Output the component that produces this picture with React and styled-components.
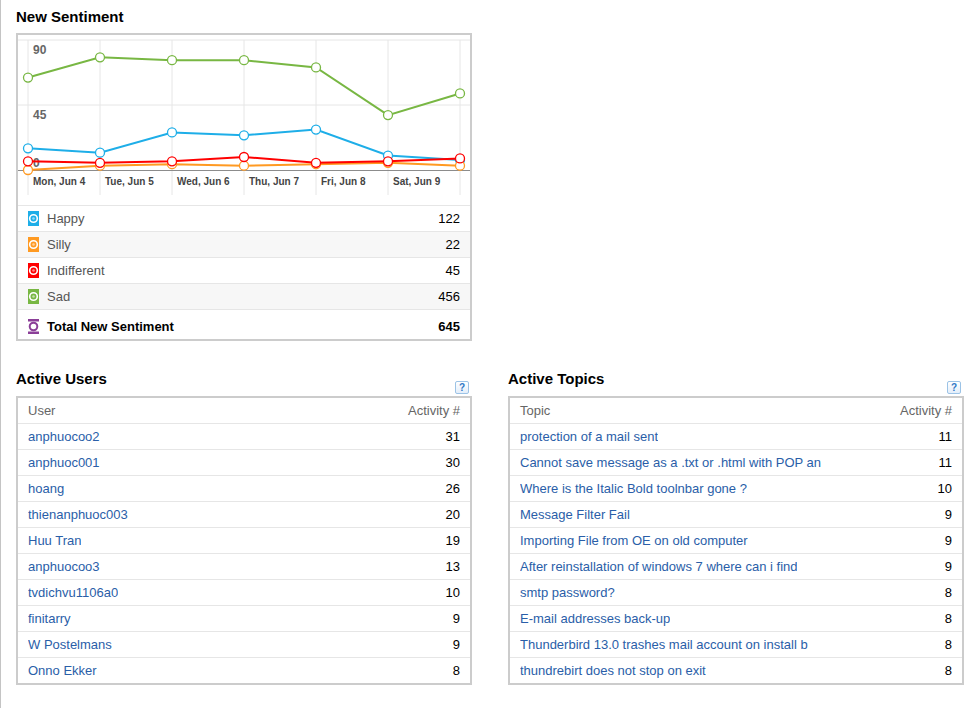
import React from 'react';
import styled, { createGlobalStyle } from 'styled-components';

const GlobalStyle = createGlobalStyle`
    body{
        margin:0;
        background:#fff;
        font-family:"Liberation Sans", Arial, sans-serif;
        font-size:13px;
        color:#000;
    }
`;

const Page = styled.div`
    box-sizing:border-box;
    min-height:100vh;
    border-left:1px solid #c4c4c4;
    padding:8px 3px 20px 15px;
`;

const Title = styled.h2`
    margin:0;
    font-size:15px;
    line-height:18px;
    font-weight:bold;
    color:#000;
`;

const TopSection = styled.section`
    width:456px;
    ${Title}{
        margin-bottom:7px;
    }
`;

const Panel = styled.div`
    border:2px solid #ccc;
    background:#fff;
`;

const Chart = styled.svg`
    display:block;
    width:452px;
    height:170px;
    font-family:"Liberation Sans", Arial, sans-serif;
`;

// rows are 26px with their top rule, the first one 25px, the total row 30px
const Row = styled.div`
    display:flex;
    align-items:center;
    justify-content:space-between;
    box-sizing:border-box;
    height:${p => p.$first ? '25px' : p.$tall ? '30px' : '26px'};
    padding:${p => p.$tall ? '4px 10px 0' : '0 10px'};
    border-top:${p => p.$first ? 'none' : '1px solid #e6e6e6'};
    background:${p => p.$striped ? '#f7f7f7' : '#fff'};
    font-weight:${p => p.$bold ? 'bold' : 'normal'};
    color:${p => p.$muted ? '#666' : '#000'};
    white-space:nowrap;
`;

const LegendLabel = styled.span`
    display:flex;
    align-items:center;
    gap:8px;
    color:${p => p.$strong ? '#000' : '#555'};
`;

const RowLink = styled.a`
    color:#2a5ea8;
    text-decoration:none;
    overflow:hidden;
`;

const Columns = styled.div`
    display:grid;
    grid-template-columns:456px 456px;
    column-gap:36px;
    margin-top:29px;
`;

const ColumnHead = styled.div`
    display:flex;
    justify-content:space-between;
    align-items:flex-start;
    height:26px;
`;

const HelpIcon = styled.span`
    align-self:flex-end;
    margin:0 3px 2px 0;
    width:12px;
    height:11px;
    border:1px solid #9cc3e6;
    border-radius:2px;
    background:linear-gradient(#ffffff, #e3eefa);
    color:#2f78c6;
    font-size:10px;
    font-weight:bold;
    line-height:11px;
    text-align:center;
`;

const days = ['Mon, Jun 4', 'Tue, Jun 5', 'Wed, Jun 6', 'Thu, Jun 7', 'Fri, Jun 8', 'Sat, Jun 9'];
const xs = [10, 82, 154, 226, 298, 370, 442];
const yOf = v => 135 - v * 130 / 90;

const series = [
    { name: 'Sad', color: '#78b743', data: [64, 78, 76, 76, 71, 38, 53] },
    { name: 'Happy', color: '#1eaee8', data: [15, 12, 26, 24, 28, 10, 7] },
    { name: 'Silly', color: '#ff9a22', data: [0, 3, 4, 3, 4, 5, 3] },
    { name: 'Indifferent', color: '#ff0000', data: [6, 5, 6, 9, 5, 6, 8] },
];

const legend = [
    { name: 'Happy', color: '#1eaee8', total: 122 },
    { name: 'Silly', color: '#ff9a22', total: 22 },
    { name: 'Indifferent', color: '#ff0000', total: 45 },
    { name: 'Sad', color: '#78b743', total: 456 },
];

const users = [
    ['anphuocoo2', 31], ['anphuoc001', 30], ['hoang', 26], ['thienanphuoc003', 20], ['Huu Tran', 19],
    ['anphuocoo3', 13], ['tvdichvu1106a0', 10], ['finitarry', 9], ['W Postelmans', 9], ['Onno Ekker', 8],
];

const topics = [
    ['protection of a mail sent', 11],
    ['Cannot save message as a .txt or .html with POP an', 11],
    ['Where is the Italic Bold toolnbar gone ?', 10],
    ['Message Filter Fail', 9],
    ['Importing File from OE on old computer', 9],
    ['After reinstallation of windows 7 where can i find', 9],
    ['smtp password?', 8],
    ['E-mail addresses back-up', 8],
    ['Thunderbird 13.0 trashes mail account on install b', 8],
    ['thundrebirt does not stop on exit', 8],
];

// little legend marker: coloured block with a ring
function Marker({ color, hollow }) {
    if (hollow) {
        return (
            <svg width="11" height="15" viewBox="0 0 11 15">
                <rect x="0" y="0" width="11" height="2.5" fill={color} />
                <rect x="0" y="12.5" width="11" height="2.5" fill={color} />
                <circle cx="5.5" cy="7.5" r="3.8" fill="#fff" stroke={color} strokeWidth="2" />
            </svg>
        );
    }
    return (
        <svg width="11" height="15" viewBox="0 0 11 15">
            <rect x="0" y="0" width="11" height="15" fill={color} />
            <circle cx="5.5" cy="7.5" r="3.8" fill={color} stroke="#fff" strokeWidth="1.6" />
            <circle cx="5.5" cy="7.5" r="1.3" fill="#fff" opacity="0.55" />
        </svg>
    );
}

function SentimentChart() {
    return (
        <Chart viewBox="0 0 452 170">
            {[5, 70].map(y => (
                <line key={y} x1="0" x2="452" y1={y} y2={y} stroke="#e6e6e6" />
            ))}
            {xs.map(x => (
                <line key={x} x1={x} x2={x} y1="5" y2="160" stroke="#e6e6e6" />
            ))}
            <line x1="0" x2="452" y1="135.5" y2="135.5" stroke="#8c8c8c" />
            <text x="15" y="19" fontSize="12" fontWeight="bold" fill="#666">90</text>
            <text x="15" y="84" fontSize="12" fontWeight="bold" fill="#666">45</text>
            <text x="15" y="132" fontSize="12" fontWeight="bold" fill="#666">0</text>
            {days.map((d, i) => (
                <text key={d} x={xs[i] + 5} y="150" fontSize="10" fontWeight="bold" fill="#444">{d}</text>
            ))}
            {series.map(s => (
                <g key={s.name}>
                    <polyline
                        points={s.data.map((v, i) => `${xs[i]},${yOf(v)}`).join(' ')}
                        fill="none"
                        stroke={s.color}
                        strokeWidth="2"
                    />
                    {s.data.map((v, i) => (
                        <circle key={i} cx={xs[i]} cy={yOf(v)} r="4.5" fill="#fff" stroke={s.color} strokeWidth="1.3" />
                    ))}
                </g>
            ))}
        </Chart>
    );
}

function ActivityTable({ title, label, rows }) {
    return (
        <section>
            <ColumnHead>
                <Title>{title}</Title>
                <HelpIcon>?</HelpIcon>
            </ColumnHead>
            <Panel>
                <Row $first $muted>
                    <span>{label}</span>
                    <span>Activity #</span>
                </Row>
                {rows.map(([name, n]) => (
                    <Row key={name}>
                        <RowLink href="#">{name}</RowLink>
                        <span>{n}</span>
                    </Row>
                ))}
            </Panel>
        </section>
    );
}

export default function App() {
    return (
        <Page>
            <GlobalStyle />
            <TopSection>
                <Title>New Sentiment</Title>
                <Panel>
                    <SentimentChart />
                    {legend.map((l, i) => (
                        <Row key={l.name} $striped={i % 2 === 1}>
                            <LegendLabel>
                                <Marker color={l.color} />
                                {l.name}
                            </LegendLabel>
                            <span>{l.total}</span>
                        </Row>
                    ))}
                    <Row $tall $bold>
                        <LegendLabel $strong>
                            <Marker color="#8b3f98" hollow />
                            Total New Sentiment
                        </LegendLabel>
                        <span>645</span>
                    </Row>
                </Panel>
            </TopSection>
            <Columns>
                <ActivityTable title="Active Users" label="User" rows={users} />
                <ActivityTable title="Active Topics" label="Topic" rows={topics} />
            </Columns>
        </Page>
    );
}
